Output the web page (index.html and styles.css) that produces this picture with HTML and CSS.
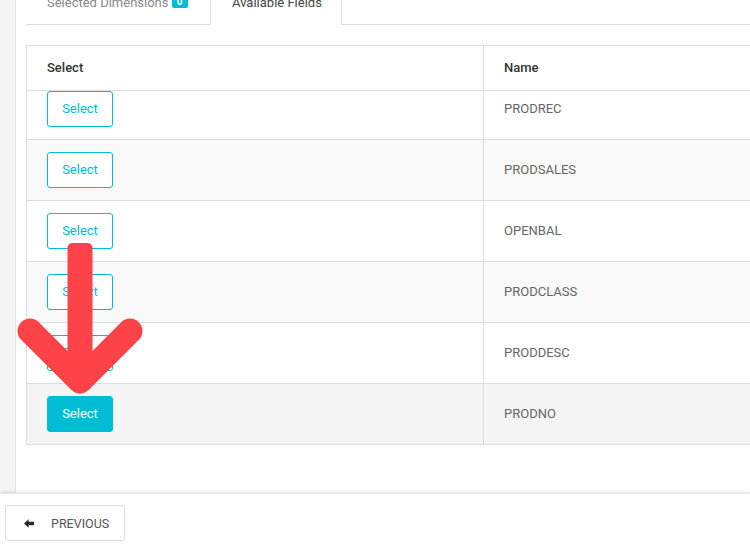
FILE: index.html
```html
<!DOCTYPE html>
<html>
<head>
<meta charset="utf-8">
<link rel="stylesheet" href="styles.css">
</head>
<body>
<div class="page">
  <div class="main">
    <div class="strip"></div>
    <div class="content">
      <div class="tabs">
        <div class="tab tab-inactive">Selected Dimensions <span class="badge">0</span></div>
        <div class="tab tab-active">Available Fields</div>
        <div class="tab-fill"></div>
      </div>
      <div class="table-wrap">
        <table class="grid">
          <thead>
            <tr><th class="col-select">Select</th><th>Name</th></tr>
          </thead>
          <tbody>
            <tr class="first"><td><button class="btn-select">Select</button></td><td class="name">PRODREC</td></tr>
            <tr class="alt"><td><button class="btn-select">Select</button></td><td class="name">PRODSALES</td></tr>
            <tr><td><button class="btn-select">Select</button></td><td class="name">OPENBAL</td></tr>
            <tr class="alt"><td><button class="btn-select">Select</button></td><td class="name">PRODCLASS</td></tr>
            <tr><td><button class="btn-select">Select</button></td><td class="name">PRODDESC</td></tr>
            <tr class="hover"><td><button class="btn-select filled">Select</button></td><td class="name">PRODNO</td></tr>
          </tbody>
        </table>
      </div>
    </div>
  </div>
  <div class="footer">
    <button class="btn-prev">
      <svg class="prev-icon" width="10" height="9" viewBox="0 0 10 9"><path d="M0 4.5 L4.6 0.2 L4.6 2.8 L10 2.8 L10 6.2 L4.6 6.2 L4.6 8.8 Z" fill="#2b2b2b"/></svg>
      <span>PREVIOUS</span>
    </button>
  </div>
  <svg class="red-arrow" width="160" height="400" viewBox="0 0 160 400">
    <rect x="67.5" y="243" width="25" height="140" rx="5" fill="#fe4348"/>
    <polyline points="30,331 80,381 130,331" fill="none" stroke="#fe4348" stroke-width="25" stroke-linecap="round" stroke-linejoin="round"/>
  </svg>
</div>
</body>
</html>
```
FILE: styles.css
```css
html, body {
  margin: 0;
  padding: 0;
  width: 750px;
  height: 550px;
  overflow: hidden;
  background: #fff;
  font-family: Roboto, "Liberation Sans", sans-serif;
}

.page {
  position: relative;
  width: 750px;
  height: 550px;
  display: flex;
  flex-direction: column;
}

.main {
  height: 493px;
  flex: none;
  display: flex;
  overflow: hidden;
}

.strip {
  width: 15px;
  background: #f4f4f4;
  border-right: 1px solid #e4e4e4;
  flex: none;
}

.content {
  flex: 1;
  padding-left: 10px;
  overflow: hidden;
}

.tabs {
  display: flex;
  margin-top: -7px;
  height: 32px;
}

.tab {
  box-sizing: border-box;
  height: 32px;
  line-height: 20px;
  font-size: 13px;
  padding-left: 21px;
  flex: none;
}

.tab-inactive {
  width: 185px;
  color: #888;
  border-right: 1px solid #ddd;
  border-bottom: 1px solid #ddd;
}

.tab-active {
  width: 131px;
  color: #444;
  border-right: 1px solid #ddd;
}

.tab-fill {
  flex: 1;
  border-bottom: 1px solid #ddd;
}

.badge {
  display: inline-block;
  background: #00bcd4;
  color: #fff;
  font-size: 10px;
  font-weight: 700;
  line-height: 13px;
  padding: 0 5px;
  border-radius: 2px;
  margin-left: 0;
  vertical-align: 2px;
}

.table-wrap {
  margin-top: 20px;
}

.grid {
  border-collapse: collapse;
  width: 900px;
  font-size: 13px;
}

.grid th {
  text-align: left;
  font-weight: 500;
  color: #333;
  height: 45px;
  padding: 0 20px 2px;
  border: 1px solid #ddd;
  box-sizing: border-box;
}

.grid th.col-select {
  width: 457px;
}

.grid td {
  border: 1px solid #ddd;
  padding: 12px 20px;
  color: #666;
  height: 36px;
  vertical-align: middle;
}

.grid td.name {
  height: 36px;
  padding-top: 11px;
  padding-bottom: 13px;
}

.grid tr.first td {
  padding-top: 0;
}

.grid tr.first td.name {
  height: 34px;
  padding-top: 0;
  padding-bottom: 14px;
}

.grid tr.alt td {
  background: #f9f9f9;
}

.grid tr.hover td {
  background: #f5f5f5;
}

.btn-select {
  display: block;
  width: 66px;
  height: 36px;
  border: 1px solid #00bcd4;
  border-radius: 3px;
  background: #fff;
  color: #00bcd4;
  font-family: Roboto, "Liberation Sans", sans-serif;
  font-size: 13px;
  padding: 0 0 2px;
}

.btn-select.filled {
  background: #00bcd4;
  color: #fff;
}

.footer {
  flex: 1;
  padding: 11px 5px;
  box-shadow: 0 -1px 3px rgba(0, 0, 0, 0.12);
  border-top: 1px solid #e8e8e8;
  position: relative;
}

.btn-prev {
  display: flex;
  align-items: center;
  box-sizing: border-box;
  width: 120px;
  height: 36px;
  background: #fff;
  border: 1px solid #ddd;
  border-radius: 3px;
  padding: 0 0 0 18px;
  font-family: Roboto, "Liberation Sans", sans-serif;
  font-size: 12.5px;
  color: #555;
}

.prev-icon {
  margin-right: 17px;
}

.red-arrow {
  position: absolute;
  left: 0;
  top: 0;
}
```
